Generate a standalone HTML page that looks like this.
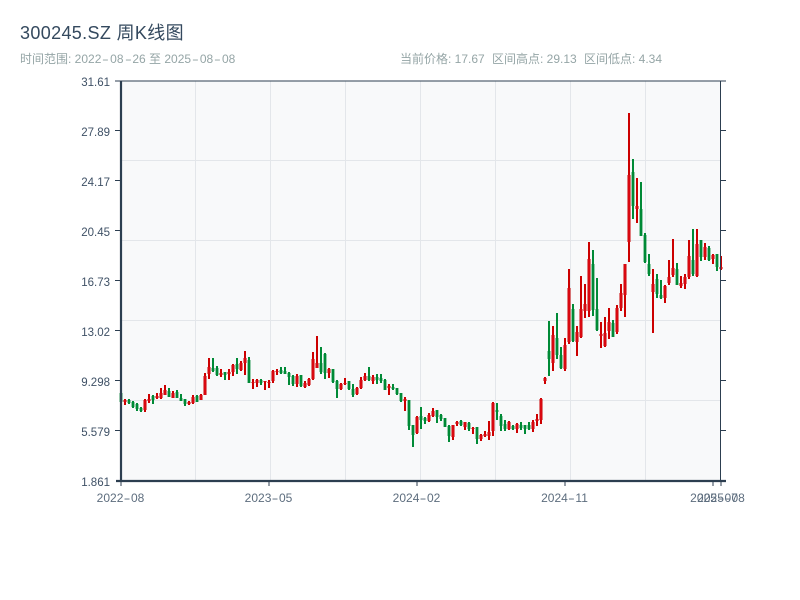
<!DOCTYPE html>
<html lang="zh"><head><meta charset="utf-8"><title>300245.SZ 周K线图</title>
<style>
html,body{margin:0;padding:0;background:#fff;width:800px;height:600px;overflow:hidden}
body{position:relative;font-family:"Liberation Sans","Noto Sans CJK SC",sans-serif}
.t{position:absolute;white-space:nowrap}
.h{display:inline-block;width:8.8px;text-align:center;transform:scaleX(1.7)}
.title{left:20px;top:23px;font-size:18px;line-height:21px;color:#34495e;letter-spacing:.35px}
.sub{top:52px;font-size:12px;line-height:14px;color:#95a5a6}
.y{right:690px;font-size:11.5px;line-height:14px;color:#3f5166;text-align:right}
.x{top:491px;font-size:12px;line-height:14px;color:#5d6d7e;transform:translateX(-50%)}
.x .h{width:7.6px}
svg{position:absolute;left:0;top:0}
</style></head><body>
<svg width="800" height="600" viewBox="0 0 800 600">
<rect x="121" y="81" width="600" height="400" fill="#f8f9fa"/>
<path d="M121 160.5H721M121 240.5H721M121 320.5H721M121 400.5H721M195.5 81V481M270.5 81V481M345.5 81V481M420.5 81V481M495.5 81V481M570.5 81V481M645.5 81V481" stroke="#e3e6ea" stroke-width="1" fill="none"/>
<defs>
<path id="rb" fill="none" d="M125 400V402M145 400V410M149 399V401M157 396V398M161 393V398M165 390V395M173 393V398M189 402V404M193 397V403M201 395V400M205 376V395M209 367V374M221 373V375M229 372V374M233 365V372M241 363V370M245 358V363M253 382V383M257 380V383M265 381V382M269 382V383M273 371V381M277 371V372M297 376V384M305 383V387M309 379V385M313 359V379M317 363V368M329 369V373M341 384V389M345 383V384M357 388V394M361 380V388M365 376V380M373 377V381M389 386V388M405 399V401M417 417V433M429 415V421M433 411V416M453 425V437M457 422V424M465 422V427M473 428V429M481 435V439M485 434V436M489 432V436M493 403V431M509 422V429M517 424V429M533 422V429M537 419V421M541 399V420M545 378V381M553 335V363M565 345V369M569 288V342M577 332V342M581 309V337M585 304V311M589 259V311M601 334V336M605 333V346M609 322V331M617 308V332M621 293V308M625 264V295M629 175V242M637 206V209M653 284V292M665 286V298M669 277V283M673 268V275M681 283V286M685 277V284M689 256V277M697 244V276M705 247V257M713 255V259M721 267V269"/>
</defs>
<path stroke="#cc0000" stroke-width="2" fill="none" d="M125 399V405M145 399V412M149 394V403M157 393V399M161 388V399M165 385V395M173 391V398M189 401V405M193 395V404M201 394V400M205 373V395M209 358V379M221 369V377M229 369V380M233 364V376M241 361V371M245 351V375M253 379V389M257 379V387M265 381V390M269 380V388M273 370V383M277 369V375M297 374V387M305 381V388M309 378V386M313 352V380M317 336V368M329 368V378M341 383V390M345 378V385M357 387V395M361 377V389M365 373V381M373 375V384M389 384V395M405 397V411M417 416V434M429 413V422M433 408V417M453 425V440M457 421V426M465 422V430M473 427V434M481 434V441M485 431V437M489 421V440M493 402V436M509 421V430M517 423V433M533 420V432M537 414V426M541 398V424M545 377V384M553 326V371M565 338V371M569 269V344M577 326V356M581 276V338M585 284V318M589 242V317M601 322V348M605 317V347M609 308V339M617 305V334M621 284V311M625 264V317M629 113V262M637 178V223M653 269V333M665 285V303M669 260V285M673 239V277M681 276V288M685 274V289M689 240V279M697 229V277M705 243V260M713 254V264M721 256V270"/>
<path stroke="#008a36" stroke-width="2" fill="none" d="M121 393V402M129 399V404M133 401V408M137 403V411M141 407V412M153 395V404M169 388V397M177 390V398M181 394V401M185 399V406M197 395V402M213 358V372M217 366V376M225 372V380M237 358V374M249 357V383M261 379V385M281 367V374M285 367V374M289 372V385M293 375V386M301 375V387M321 347V374M325 353V379M333 369V383M337 380V398M349 381V390M353 384V397M369 367V381M377 374V384M381 374V383M385 379V390M393 384V390M397 388V395M401 393V402M409 400V430M413 425V447M421 407V429M425 417V424M437 410V423M441 414V421M445 418V427M449 425V442M461 420V426M469 422V431M477 427V444M497 403V420M501 414V431M505 420V431M513 425V430M521 422V430M525 425V434M529 422V430M549 321V376M557 313V359M561 347V369M573 304V342M593 250V316M597 278V331M613 320V337M633 159V219M641 182V236M645 233V263M649 254V276M657 274V298M661 280V299M677 263V285M693 229V276M701 240V261M709 246V261M717 254V271"/>
<path stroke="#008a36" stroke-width="2.8" fill="none" d="M121 393V402M129 400V403M133 402V407M137 404V409M141 408V411M153 396V400M169 391V397M177 392V398M181 398V401M185 399V404M197 396V402M213 368V371M217 368V375M225 372V375M237 364V369M249 360V383M261 380V383M281 370V373M285 371V374M289 373V377M293 376V384M301 375V386M321 363V372M325 354V373M333 369V382M337 381V389M349 381V389M353 389V395M369 376V380M377 377V380M381 378V381M385 380V390M393 387V389M397 388V394M401 393V401M409 400V426M413 425V435M421 416V420M425 418V421M437 410V417M441 415V419M445 418V427M449 426V436M461 421V425M469 423V429M477 427V439M497 410V412M501 416V426M505 424V429M513 426V429M521 425V428M525 425V429M529 425V429M549 351V359M557 338V355M561 355V368M573 309V341M593 264V310M597 309V330M613 323V337M633 172V206M641 209V236M645 235V262M649 264V274M657 279V294M661 295V298M677 269V285M693 260V274M701 240V257M709 248V260M717 254V267"/>
<use href="#rb" stroke="#c80000" stroke-width="3"/>
<use href="#rb" stroke="#ea1020" stroke-width="1"/>
<g fill="none" stroke="#2c3e50">
<path stroke-width="1" d="M115 81H726M720.5 81V481"/>
<path stroke-width="2.2" d="M121 81V481M116 481H726"/>
<path stroke-width="1" d="M115 81H121M115 130.5H121M115 180.5H121M115 230.5H121M115 280.5H121M115 330.5H121M115 380.5H121M115 430.5H121M721 130.5H726M721 180.5H726M721 230.5H726M721 280.5H726M721 330.5H726M721 380.5H726M721 430.5H726M121 482V486M269 482V486M417 482V486M565 482V486M713 482V486M721 482V486"/>
</g>
</svg>
<div class="t title">300245.SZ 周K线图</div>
<div class="t sub" style="left:20px">时间范围: 2022<span class="h">-</span>08<span class="h">-</span>26 至 2025<span class="h">-</span>08<span class="h">-</span>08</div>
<div class="t sub" style="left:400px">当前价格: 17.67</div>
<div class="t sub" style="left:492px">区间高点: 29.13</div>
<div class="t sub" style="left:584px">区间低点: 4.34</div>
<div class="t y" style="top:76px">31.61</div>
<div class="t y" style="top:126px">27.89</div>
<div class="t y" style="top:176px">24.17</div>
<div class="t y" style="top:226px">20.45</div>
<div class="t y" style="top:276px">16.73</div>
<div class="t y" style="top:326px">13.02</div>
<div class="t y" style="top:376px">9.298</div>
<div class="t y" style="top:426px">5.579</div>
<div class="t y" style="top:476px">1.861</div>
<div class="t x" style="left:120.5px">2022<span class="h">-</span>08</div>
<div class="t x" style="left:268.5px">2023<span class="h">-</span>05</div>
<div class="t x" style="left:416.5px">2024<span class="h">-</span>02</div>
<div class="t x" style="left:564.5px">2024<span class="h">-</span>11</div>
<div class="t x" style="left:714px">2025<span class="h">-</span>07</div>
<div class="t x" style="left:721px">2025<span class="h">-</span>08</div>
</body></html>
